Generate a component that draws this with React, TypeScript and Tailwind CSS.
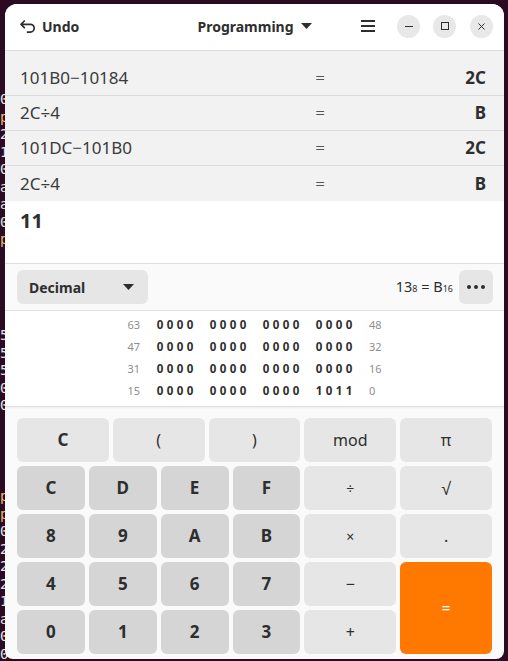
import React from "react";

const Tri = ({ w = 10, h = 6 }: { w?: number; h?: number }) => (
  <svg width={w} height={h} viewBox={`0 0 ${w} ${h}`}>
    <path d={`M0 0 L${w} 0 L${w / 2} ${h} Z`} fill="#2e2e2e" />
  </svg>
);

const TermBlock = ({ top, chars }: { top: number; chars: string }) => (
  <div
    className="absolute left-[0px] font-['DejaVu_Sans_Mono',monospace] text-[14px] leading-[17.5px] text-[#e4e4e4]"
    style={{ top }}
  >
    {chars.split("").map((c, i) => (
      <div key={i} className={c === "p" ? "text-[#e9b76a]" : ""}>
        {c}
      </div>
    ))}
  </div>
);

const hist = [
  ["101B0−10184", "2C"],
  ["2C÷4", "B"],
  ["101DC−101B0", "2C"],
  ["2C÷4", "B"],
];

const bitRows: [string, string[], string][] = [
  ["63", ["0000", "0000", "0000", "0000"], "48"],
  ["47", ["0000", "0000", "0000", "0000"], "32"],
  ["31", ["0000", "0000", "0000", "0000"], "16"],
  ["15", ["0000", "0000", "0000", "1011"], "0"],
];

const Key = ({
  label,
  dark,
  bold,
  cls = "",
}: {
  label: React.ReactNode;
  dark?: boolean;
  bold?: boolean;
  cls?: string;
}) => (
  <div
    className={`flex items-center justify-center rounded-[6px] text-[#2e2e2e] ${
      dark ? "bg-[#d5d5d5]" : "bg-[#e6e6e6]"
    } ${bold ? "font-bold text-[17px]" : "text-[16px]"} ${cls}`}
  >
    {label}
  </div>
);

export default function App() {
  return (
    <div className="relative w-[508px] h-[661px] overflow-hidden bg-[#2c0b22] font-['Noto_Sans',sans-serif]">
      <TermBlock top={91} chars="0p210aa0p" />
      <TermBlock top={327} chars="55500" />
      <TermBlock top={488} chars="pp02221a00" />
      <div className="relative pt-[4px] pl-[5px]">
        <div className="w-[499px] h-[655px] bg-[#fafafa] rounded-t-[12px] rounded-b-[8px] overflow-hidden flex flex-col">
          {/* Header */}
          <div className="h-[47px] shrink-0 bg-white border-b border-[#dcdcdc] grid grid-cols-[1fr_auto_1fr] items-center pb-[2px]">
            <div className="flex items-center pl-[15px] gap-[6px]">
              <svg width="16" height="13" viewBox="0 0 16 13">
                <path
                  d="M4.3 1 L1 4.3 L4.3 7.6 M1 4.3 H10.3 A3.9 3.9 0 0 1 10.3 12.1 H7.5"
                  stroke="#2e2e2e"
                  strokeWidth="1.7"
                  fill="none"
                  strokeLinecap="round"
                  strokeLinejoin="round"
                />
              </svg>
              <span className="font-bold text-[14px] text-[#2e2e2e]">Undo</span>
            </div>
            <div className="flex items-center gap-[7px]">
              <span className="font-bold text-[14px] text-[#2e2e2e]">Programming</span>
              <Tri w={11} h={6} />
            </div>
            <div className="flex items-center justify-end pr-[11px]">
              <svg width="14" height="12" viewBox="0 0 14 12" className="mr-[22px]">
                <rect x="0" y="0" width="14" height="2" fill="#2e2e2e" />
                <rect x="0" y="5" width="14" height="2" fill="#2e2e2e" />
                <rect x="0" y="10" width="14" height="2" fill="#2e2e2e" />
              </svg>
              <div className="w-[23px] h-[23px] rounded-full bg-[#e8e8e8] flex items-center justify-center mr-[13px]">
                <div className="w-[8px] h-[1px] bg-[#2e2e2e]" />
              </div>
              <div className="w-[23px] h-[23px] rounded-full bg-[#e8e8e8] flex items-center justify-center mr-[14px]">
                <div className="w-[8px] h-[8px] border border-[#2e2e2e]" />
              </div>
              <div className="w-[23px] h-[23px] rounded-full bg-[#e8e8e8] flex items-center justify-center">
                <svg width="7" height="7" viewBox="0 0 7 7">
                  <path d="M0.5 0.5 L6.5 6.5 M6.5 0.5 L0.5 6.5" stroke="#2e2e2e" strokeWidth="1" />
                </svg>
              </div>
            </div>
          </div>

          {/* History */}
          <div className="bg-[#f2f2f2] pt-[10px] shrink-0">
            {hist.map(([e, r], i) => (
              <div
                key={i}
                className={`h-[35px] flex items-center pl-[15px] pr-[18px] text-[17px] text-[#3a3a3a] ${
                  i < 3 ? "border-b border-[#dcdcdc]" : ""
                }`}
              >
                <span className="flex-1">{e}</span>
                <span className="w-[20px] text-center font-light text-[#555]">=</span>
                <span className="w-[156px] text-right font-bold text-[#2e2e2e]">{r}</span>
              </div>
            ))}
          </div>

          {/* Current */}
          <div className="h-[63px] shrink-0 bg-white border-b border-[#dedede] shadow-[0_1px_2px_rgba(0,0,0,0.06)] pl-[15px] pt-[8px]">
            <span className="text-[20px] font-bold text-[#2e2e2e] leading-[24px]">11</span>
          </div>

          {/* Base bar */}
          <div className="h-[47px] shrink-0 flex items-center justify-between pl-[12px] pr-[11px] border-b border-[#e2e2e2] bg-[#fafafa]">
            <div className="w-[131px] h-[34px] rounded-[6px] bg-[#e6e6e6] flex items-center justify-between pl-[12px] pr-[14px]">
              <span className="font-bold text-[14px] text-[#2e2e2e]">Decimal</span>
              <Tri w={11} h={6} />
            </div>
            <div className="flex items-center">
              <span className="text-[14.5px] text-[#2e2e2e]">
                13<span className="text-[9px]">8</span> = B<span className="text-[9px]">16</span>
              </span>
              <div className="ml-[6px] w-[34px] h-[34px] rounded-[6px] bg-[#e6e6e6] flex items-center justify-center gap-[3px]">
                <div className="w-[4px] h-[4px] rounded-full bg-[#2e2e2e]" />
                <div className="w-[4px] h-[4px] rounded-full bg-[#2e2e2e]" />
                <div className="w-[4px] h-[4px] rounded-full bg-[#2e2e2e]" />
              </div>
            </div>
          </div>

          {/* Bits */}
          <div className="h-[96px] shrink-0 bg-white border-b border-[#dedede] shadow-[0_1px_2px_rgba(0,0,0,0.05)] pt-[3px] flex flex-col">
            {bitRows.map(([l, groups, r], i) => (
              <div key={i} className="h-[22px] flex items-center justify-center">
                <span className="w-[24px] text-right text-[11px] text-[#8e8e8e]">{l}</span>
                <div className="flex gap-[13px] ml-[15px] mr-[15px]">
                  {groups.map((g, j) => (
                    <div key={j} className="flex">
                      {g.split("").map((d, k) => (
                        <span key={k} className="w-[10px] text-center text-[11.5px] font-bold text-[#2e2e2e]">
                          {d}
                        </span>
                      ))}
                    </div>
                  ))}
                </div>
                <span className="w-[24px] text-left text-[11px] text-[#8e8e8e]">{r}</span>
              </div>
            ))}
          </div>

          {/* Keypad */}
          <div className="flex-1 px-[12px] pt-[11px]">
            <div className="grid grid-cols-5 grid-rows-[repeat(5,44px)] gap-[4px]">
              <Key label="C" bold />
              <Key label="(" />
              <Key label=")" />
              <Key label="mod" />
              <Key label="π" />
              <div className="col-span-3 row-span-4 grid grid-cols-4 grid-rows-4 gap-[4px]">
                {["C", "D", "E", "F", "8", "9", "A", "B", "4", "5", "6", "7", "0", "1", "2", "3"].map((k, i) => (
                  <Key key={i} label={k} dark bold />
                ))}
              </div>
              <Key label="÷" cls="!text-[14px]" />
              <Key label="√" cls="!text-[18px]" />
              <Key label="×" cls="!text-[14px]" />
              <Key label="." />
              <Key label="−" />
              <div className="row-span-2 rounded-[6px] bg-[#ff7800] flex items-center justify-center text-white text-[16px]">
                =
              </div>
              <Key label="+" />
            </div>
          </div>
        </div>
      </div>
    </div>
  );
}
